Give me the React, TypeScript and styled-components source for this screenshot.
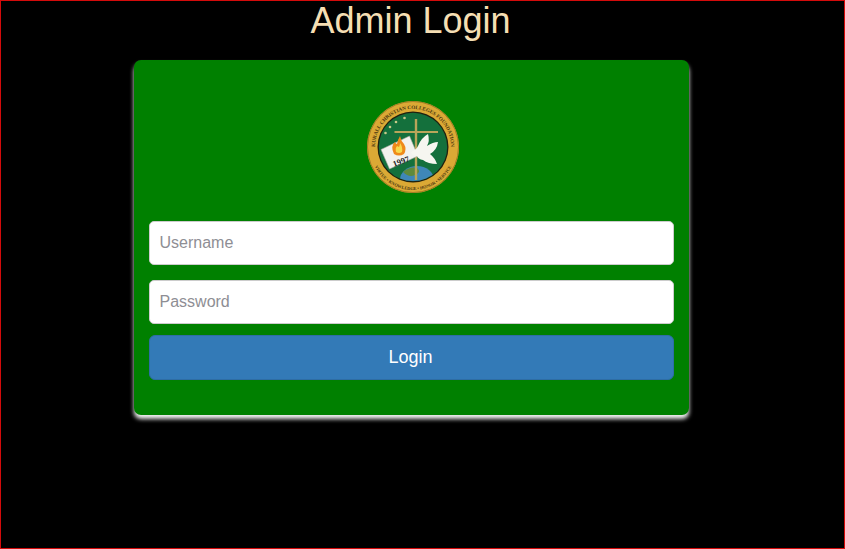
import React from 'react';
import styled, { createGlobalStyle } from 'styled-components';

const GlobalStyle = createGlobalStyle`
  html, body {
    margin: 0;
    padding: 0;
    background: #000;
  }
  * {
    box-sizing: border-box;
  }
`;

const Page = styled.div`
  width: 845px;
  height: 549px;
  background: #000;
  border: 1px solid #d40b0b;
  font-family: 'Liberation Sans', Arial, sans-serif;
  overflow: hidden;
`;

const Column = styled.div`
  width: 555px;
  margin-left: 133px;
`;

const Title = styled.h1`
  margin: 0;
  height: 59px;
  padding-right: 2px;
  text-align: center;
  font-size: 36px;
  line-height: 40px;
  font-weight: 400;
  color: #f5deb3;
`;

const Card = styled.form`
  height: 355px;
  background: #008000;
  border-radius: 7px;
  padding: 40px 15px 0;
  box-shadow: 0 4px 4px rgba(255, 255, 255, 0.95);
  display: flex;
  flex-direction: column;
`;

const LogoRow = styled.div`
  height: 121px;
  display: flex;
  justify-content: center;
  align-items: flex-start;
  padding-left: 4px;
`;

const Input = styled.input<{ $gap: number }>`
  display: block;
  width: 100%;
  height: 44px;
  margin-bottom: ${({ $gap }) => $gap}px;
  padding: 0 9.5px;
  border: 1px solid #ccc;
  border-radius: 5px;
  background: #fff;
  font-family: inherit;
  font-size: 16px;
  color: #555;
  outline: none;

  &::placeholder {
    color: #8e8e94;
    opacity: 1;
  }
`;

const LoginButton = styled.button`
  width: 100%;
  height: 45px;
  padding: 0 2px 0 0;
  border: 1px solid #2e6da4;
  border-radius: 6px;
  background: #337ab7;
  color: #fff;
  font-family: inherit;
  font-size: 18px;
  cursor: pointer;
`;

const Logo = () => (
  <svg width="94" height="94" viewBox="0 0 94 94">
    <defs>
      <path id="sealTop" d="M9.3 56.8 A38 38 0 1 1 82.7 56.8" />
      <path id="sealBottom" d="M7 65.2 A43 43 0 0 0 85 65.2" />
      <clipPath id="sealInner">
        <circle cx="46" cy="47" r="34" />
      </clipPath>
    </defs>
    <circle cx="46" cy="47" r="46" fill="#dba935" />
    <circle cx="46" cy="47" r="45.5" fill="none" stroke="#94701f" strokeWidth="0.8" />
    <circle cx="46" cy="47" r="35.5" fill="#20200f" />
    <circle cx="46" cy="47" r="34.2" fill="#14703c" />
    <g clipPath="url(#sealInner)">
      <ellipse cx="50" cy="80" rx="17" ry="14" fill="#3f87b8" />
      <path d="M36 72 q7 -6 14 -4 q5 4 -2 7 q-6 3 -12 -3z" fill="#5f8a3c" />
    </g>
    <path d="M47.8 19 h2.4 v61 h-2.4z" fill="#b9a55a" />
    <path d="M27.5 31 h43.5 v2 h-43.5z" fill="#b9a55a" />
    <g fill="#c9c98a">
      <circle cx="18.5" cy="33" r="1.3" />
      <circle cx="23" cy="27" r="1.3" />
      <circle cx="29" cy="22" r="1.3" />
      <circle cx="37.5" cy="18" r="1.3" />
    </g>
    <path d="M14 49.5 L42.5 36 L51 56 L22.5 69 Z" fill="#f2f2ee" stroke="#a9a9a0" strokeWidth="0.6" />
    <path d="M27 54 q-4 -8 1 -12 q1 2 2 2 q1 -5 3 -8 q1 5 4 8 q3 5 0 10 q-5 3 -10 0z" fill="#ef8a1a" />
    <path d="M29 52 q-1 -4 1 -6 l2 1 q1 -2 1 -4 q3 4 2 9 q-3 2 -6 0z" fill="#f7d94c" />
    <text x="27" y="67" fontFamily="'Liberation Serif', serif" fontSize="8.5" fontWeight="700" fill="#222" transform="rotate(-20 27 67)">
      1997
    </text>
    <path d="M44 52 q5 -2 7 -6 q3 -8 10 -12 q2 7 -1 12 q6 -4 11 -4 q-1 8 -8 12 q5 4 7 10 q-9 0 -14 -4 q-5 -1 -6 -4 q-5 0 -6 -4z" fill="#f6f6f0" />
    <text fontFamily="'Liberation Serif', serif" fontSize="5.2" fontWeight="700" fill="#4a3710">
      <textPath href="#sealTop" startOffset="50%" textAnchor="middle">KURALL CHRISTIAN COLLEGES FOUNDATION</textPath>
    </text>
    <text fontFamily="'Liberation Serif', serif" fontSize="4.4" fontWeight="700" fill="#4a3710">
      <textPath href="#sealBottom" startOffset="50%" textAnchor="middle">VIRTUE • KNOWLEDGE • HONOR • SERVICE</textPath>
    </text>
  </svg>
);

export default function App() {
  return (
    <Page>
      <GlobalStyle />
      <Column>
        <Title>Admin Login</Title>
        <Card onSubmit={(e) => e.preventDefault()}>
          <LogoRow>
            <Logo />
          </LogoRow>
          <Input type="text" placeholder="Username" $gap={15} />
          <Input type="password" placeholder="Password" $gap={11} />
          <LoginButton type="submit">Login</LoginButton>
        </Card>
      </Column>
    </Page>
  );
}
